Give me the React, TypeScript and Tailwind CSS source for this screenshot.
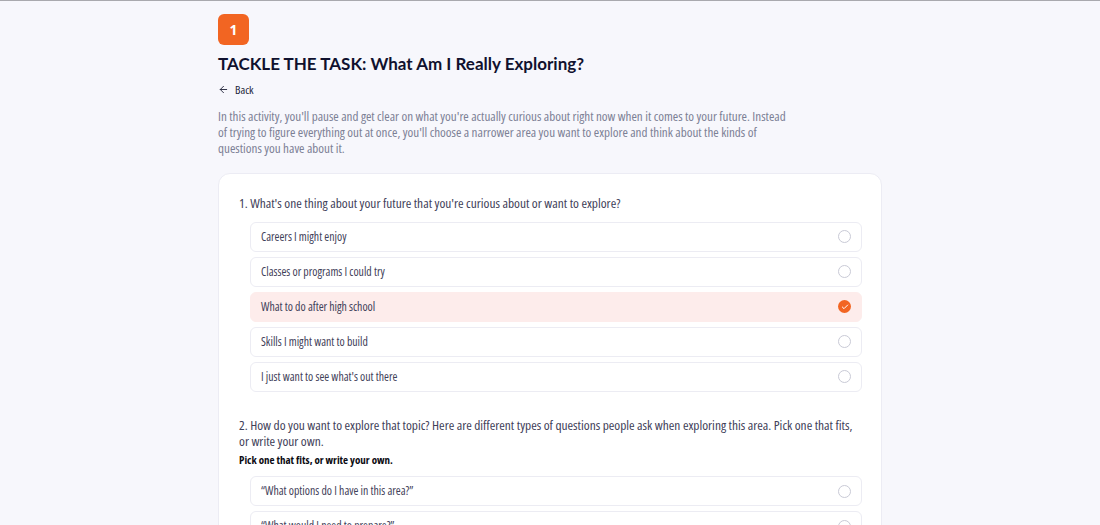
import { ArrowLeft, Check } from "lucide-react";

const firstOptions = [
  "Careers I might enjoy",
  "Classes or programs I could try",
  "What to do after high school",
  "Skills I might want to build",
  "I just want to see what's out there",
];

const secondOptions = [
  "\u201cWhat options do I have in this area?\u201d",
  "\u201cWhat would I need to prepare?\u201d",
];

function Option({ label, selected }: { label: string; selected?: boolean }) {
  return (
    <div
      className={`flex h-[30px] items-center justify-between rounded-md border px-[10px] ${
        selected ? "border-[#fdeceb] bg-[#fdeceb]" : "border-[#ececf3] bg-white"
      }`}
    >
      <span className="text-[11.8px] text-[#3f4159]">{label}</span>
      {selected ? (
        <span className="flex h-[13px] w-[13px] items-center justify-center rounded-full bg-[#f26522]">
          <Check className="h-[8px] w-[8px] text-white" strokeWidth={3} />
        </span>
      ) : (
        <span className="h-[13px] w-[13px] rounded-full border border-[#c9cad6] bg-white" />
      )}
    </div>
  );
}

export default function App() {
  return (
    <div
      className="min-h-screen border-t border-[#a9a9ae] bg-[#f7f7fc] font-stretch-condensed"
      style={{ fontFamily: '"Open Sans", sans-serif' }}
    >
      <div className="mx-auto w-[664px] pt-[13px]">
        <div className="flex h-[31px] w-[31px] items-center justify-center rounded-md bg-[#f26522] text-[14px] font-bold text-white font-stretch-normal">
          1
        </div>
        <h1
          className="mt-[6px] text-[17px] font-bold text-[#10112e]"
          style={{ fontFamily: "Lato, sans-serif" }}
        >
          TACKLE THE TASK: What Am I Really Exploring?
        </h1>
        <button className="mt-[6px] flex items-center gap-[6px] text-[11.5px] leading-[14px] text-[#22243a]">
          <ArrowLeft className="h-[11px] w-[11px]" strokeWidth={2} />
          Back
        </button>
        <p className="mt-[11px] max-w-[576px] text-[13.1px] leading-[16px] text-[#7c8095]">
          In this activity, you'll pause and get clear on what you're actually curious about right now when it comes
          to your future. Instead of trying to figure everything out at once, you'll choose a narrower area you want
          to explore and think about the kinds of questions you have about it.
        </p>

        <div className="mt-[17px] rounded-xl border border-[#ececf4] bg-white px-[20px] pt-[21px] pb-[30px]">
          <p className="text-[13.4px] leading-[16px] text-[#3f4159]">
            1. What's one thing about your future that you're curious about or want to explore?
          </p>
          <div className="mt-[11px] ml-[11px] -mr-[1px] flex flex-col gap-[5px]">
            {firstOptions.map((o, i) => (
              <Option key={o} label={o} selected={i === 2} />
            ))}
          </div>

          <p className="mt-[25px] text-[13.4px] leading-[16px] text-[#3f4159]">
            2. How do you want to explore that topic? Here are different types of questions people ask when exploring
            this area. Pick one that fits, or write your own.
          </p>
          <p className="mt-[3px] text-[11px] font-bold text-[#0b0b12]">Pick one that fits, or write your own.</p>
          <div className="mt-[8px] ml-[11px] -mr-[1px] flex flex-col gap-[5px]">
            {secondOptions.map((o) => (
              <Option key={o} label={o} />
            ))}
          </div>
        </div>
      </div>
    </div>
  );
}
